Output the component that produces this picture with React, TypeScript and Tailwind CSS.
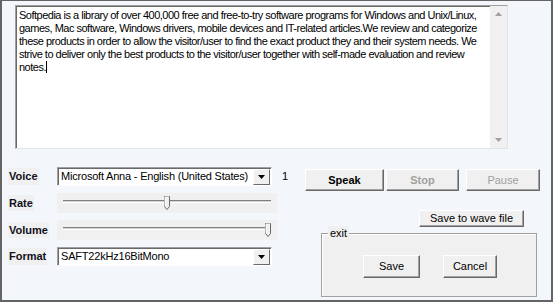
import React from "react";

const ui = { fontFamily: '"Liberation Sans", Arial, sans-serif' };

function ClassicButton({
  label,
  className = "",
  bold = false,
  disabled = false,
}: {
  label: string;
  className?: string;
  bold?: boolean;
  disabled?: boolean;
}) {
  return (
    <button
      className={`flex items-center justify-center bg-[#f0f0f0] border border-t-white border-l-white border-r-[#696969] border-b-[#696969] shadow-[inset_-1px_-1px_0_#a0a0a0] text-[11px] leading-none ${
        bold ? "font-bold" : ""
      } ${disabled ? "text-[#a0a0a0]" : "text-black"} ${className}`}
      style={ui}
    >
      {label}
    </button>
  );
}

function DropArrow() {
  return (
    <div className="w-[17px] h-[16px] flex items-center justify-center bg-[#f0f0f0] border border-t-white border-l-white border-r-[#696969] border-b-[#696969]">
      <svg width="7" height="4" viewBox="0 0 7 4">
        <path d="M0 0h7L3.5 4z" fill="#000" />
      </svg>
    </div>
  );
}

function Combo({ value, width }: { value: string; width: string }) {
  return (
    <div
      className={`${width} h-[19px] bg-white flex items-center border border-t-[#a0a0a0] border-l-[#a0a0a0] border-r-white border-b-white shadow-[inset_1px_1px_0_#696969]`}
    >
      <span className="flex-1 pl-[3px] text-[11px] tracking-[-0.2px] text-black whitespace-nowrap overflow-hidden" style={ui}>
        {value}
      </span>
      <div className="mr-[1px]">
        <DropArrow />
      </div>
    </div>
  );
}

function Slider({ pos }: { pos: number }) {
  return (
    <div className="w-[220px] h-[20px] bg-[#f0f0f0] flex items-center px-[6px] pb-[4px]">
      <div className="relative w-full h-[3px] border-t border-t-[#808080] border-b border-b-white bg-[#d4d4d4]">
        <svg
          className="absolute top-[-5px]"
          style={{ left: pos }}
          width="6"
          height="14"
          viewBox="0 0 6 14"
        >
          <path d="M0.5 0.5h5v10l-2.5 3l-2.5-3z" fill="#f0f0f0" stroke="#696969" />
          <path d="M1 1h4M1 1v9" stroke="#fff" />
        </svg>
      </div>
    </div>
  );
}

function Label({ text }: { text: string }) {
  return (
    <div className="w-[49px] flex items-center">
      <span className="bg-[#f0f0f0] px-[1px] text-[11px] font-bold text-[#101020]" style={ui}>
        {text}
      </span>
    </div>
  );
}

export default function App() {
  return (
    <div
      className="w-[553px] h-[302px] bg-[#f3f6fb] border-t border-l-2 border-r-2 border-b-2 border-[#646464] overflow-hidden"
      style={ui}
    >
      {/* text box */}
      <div className="ml-[13px] mt-[4px] w-[493px] h-[144px] flex bg-white border border-t-[#a0a0a0] border-l-[#a0a0a0] border-r-[#e3e3e3] border-b-[#e3e3e3] shadow-[inset_1px_1px_0_#696969]">
        <div className="flex-1 pl-[3px] pt-[3px] text-[11px] leading-[13px] tracking-[-0.5px] text-black">
          Softpedia is a library of over 400,000 free and free-to-try software programs for Windows and Unix/Linux,
          games, Mac software, Windows drivers, mobile devices and IT-related articles.We review and categorize
          these products in order to allow the visitor/user to find the exact product they and their system needs. We
          strive to deliver only the best products to the visitor/user together with self-made evaluation and review
          notes.
          <span className="inline-block w-[1px] h-[12px] bg-black align-[-2px]" />
        </div>
        <div className="w-[17px] bg-[#f0f0f0] flex flex-col justify-between items-center py-[6px]">
          <svg width="7" height="4" viewBox="0 0 7 4">
            <path d="M0 4h7L3.5 0z" fill="#a0a0a0" />
          </svg>
          <svg width="7" height="4" viewBox="0 0 7 4">
            <path d="M0 0h7L3.5 4z" fill="#a0a0a0" />
          </svg>
        </div>
      </div>

      <div className="flex mt-[18px]">
        {/* left controls */}
        <div className="w-[303px] pl-[6px] flex flex-col gap-[7px]">
          <div className="flex items-center h-[19px]">
            <Label text="Voice" />
            <Combo value="Microsoft Anna - English (United States)" width="w-[215px]" />
            <span className="ml-[10px] text-[11px] text-black">1</span>
          </div>
          <div className="flex items-center h-[20px]">
            <Label text="Rate" />
            <Slider pos={101} />
          </div>
          <div className="flex items-center h-[20px]">
            <Label text="Volume" />
            <Slider pos={202} />
          </div>
          <div className="flex items-center h-[19px]">
            <Label text="Format" />
            <Combo value="SAFT22kHz16BitMono" width="w-[215px]" />
          </div>
        </div>

        {/* right controls */}
        <div className="flex flex-col pt-[2px]">
          <div className="flex">
            <ClassicButton label="Speak" bold className="w-[79px] h-[22px]" />
            <ClassicButton label="Stop" bold disabled className="w-[73px] h-[22px] ml-[2px]" />
            <ClassicButton label="Pause" disabled className="w-[74px] h-[22px] ml-[7px]" />
          </div>
          <div className="flex justify-end pr-[16px] mt-[19px]">
            <ClassicButton label="Save to wave file" className="w-[105px] h-[17px]" />
          </div>
          <div className="relative ml-[16px] mt-[6px] w-[216px] h-[64px] bg-[#f0f0f0] border border-[#a0a0a0] shadow-[inset_1px_1px_0_#fff]">
            <span className="absolute -top-[8px] left-[6px] bg-[#f0f0f0] px-[2px] text-[11px] leading-[14px] text-black">
              exit
            </span>
            <div className="flex justify-center gap-[23px] mt-[21px] pl-[2px]">
              <ClassicButton label="Save" className="w-[57px] h-[23px]" />
              <ClassicButton label="Cancel" className="w-[54px] h-[23px]" />
            </div>
          </div>
        </div>
      </div>
    </div>
  );
}
